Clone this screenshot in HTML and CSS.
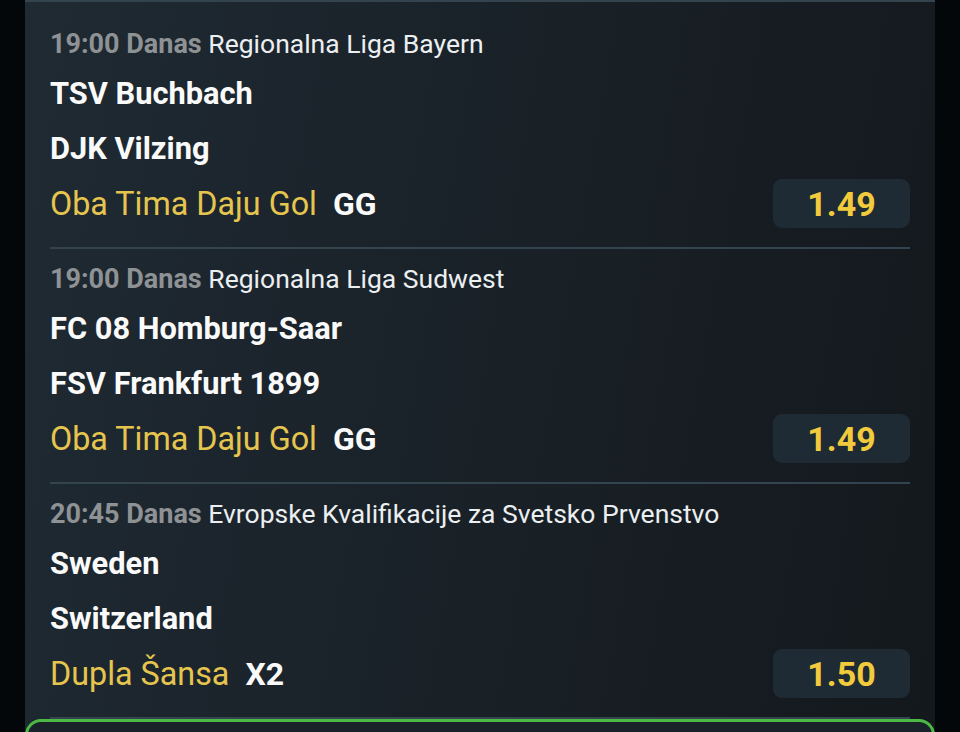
FILE: index.html
```html
<!DOCTYPE html>
<html lang="sr">
<head>
<meta charset="utf-8">
<title>Tiket</title>
<link rel="stylesheet" href="styles.css">
</head>
<body>
<div class="page">
  <div class="card">
    <div class="match">
      <div class="meta"><span class="time">19:00 Danas</span> <span class="league">Regionalna Liga Bayern</span></div>
      <div class="team">TSV Buchbach</div>
      <div class="team">DJK Vilzing</div>
      <div class="market">
        <div class="bet"><span class="bet-name">Oba Tima Daju Gol</span><span class="pick">GG</span></div>
        <div class="odds">1.49</div>
      </div>
    </div>
    <div class="match">
      <div class="meta"><span class="time">19:00 Danas</span> <span class="league">Regionalna Liga Sudwest</span></div>
      <div class="team">FC 08 Homburg-Saar</div>
      <div class="team">FSV Frankfurt 1899</div>
      <div class="market">
        <div class="bet"><span class="bet-name">Oba Tima Daju Gol</span><span class="pick">GG</span></div>
        <div class="odds">1.49</div>
      </div>
    </div>
    <div class="match">
      <div class="meta"><span class="time">20:45 Danas</span> <span class="league">Evropske Kvalifikacije za Svetsko Prvenstvo</span></div>
      <div class="team">Sweden</div>
      <div class="team">Switzerland</div>
      <div class="market">
        <div class="bet"><span class="bet-name">Dupla Šansa</span><span class="pick">X2</span></div>
        <div class="odds">1.50</div>
      </div>
    </div>
    <div class="summary"></div>
  </div>
</div>
</body>
</html>
```
FILE: styles.css
```css
html, body {
  margin: 0;
  padding: 0;
}
body {
  background: #03070a;
  font-family: Roboto, "Noto Sans", sans-serif;
  height: 732px;
  overflow: hidden;
}
.page {
  padding: 0 25px;
}
.card {
  background: linear-gradient(100deg, #1f2a33 0%, #1a2229 45%, #13181c 100%);
  border-top: 2px solid #34444e;
  padding: 20px 25px 0;
  height: 732px;
  box-sizing: border-box;
  overflow: hidden;
}
.match {
  padding: 0 0 16px;
  border-bottom: 2px solid #34444e;
}
.match + .match {
  padding-top: 8px;
}
.meta {
  height: 44px;
  line-height: 44px;
  font-size: 26.5px;
  white-space: nowrap;
}
.time {
  color: #8f9295;
  font-weight: 700;
  font-size: 27px;
}
.league {
  color: #eceff1;
}
.team {
  height: 55px;
  line-height: 56px;
  font-size: 30.8px;
  font-weight: 700;
  color: #fafafa;
}
.market {
  height: 55px;
  display: flex;
  align-items: center;
  justify-content: space-between;
}
.bet {
  display: flex;
  align-items: center;
  gap: 16px;
  font-size: 32px;
}
.bet-name {
  color: #e6c54f;
  font-size: 32.3px;
}
.pick {
  color: #fafafa;
  font-weight: 700;
}
.odds {
  width: 137px;
  height: 49px;
  border-radius: 9px;
  background: #1f2b34;
  color: #f2cb3c;
  font-size: 34px;
  font-weight: 700;
  display: flex;
  align-items: center;
  justify-content: center;
}
.summary {
  margin: 0 -25px;
  height: 60px;
  border: 3px solid #4cb944;
  border-bottom: none;
  border-radius: 16px 16px 0 0;
  background: #1a2229;
}
```
